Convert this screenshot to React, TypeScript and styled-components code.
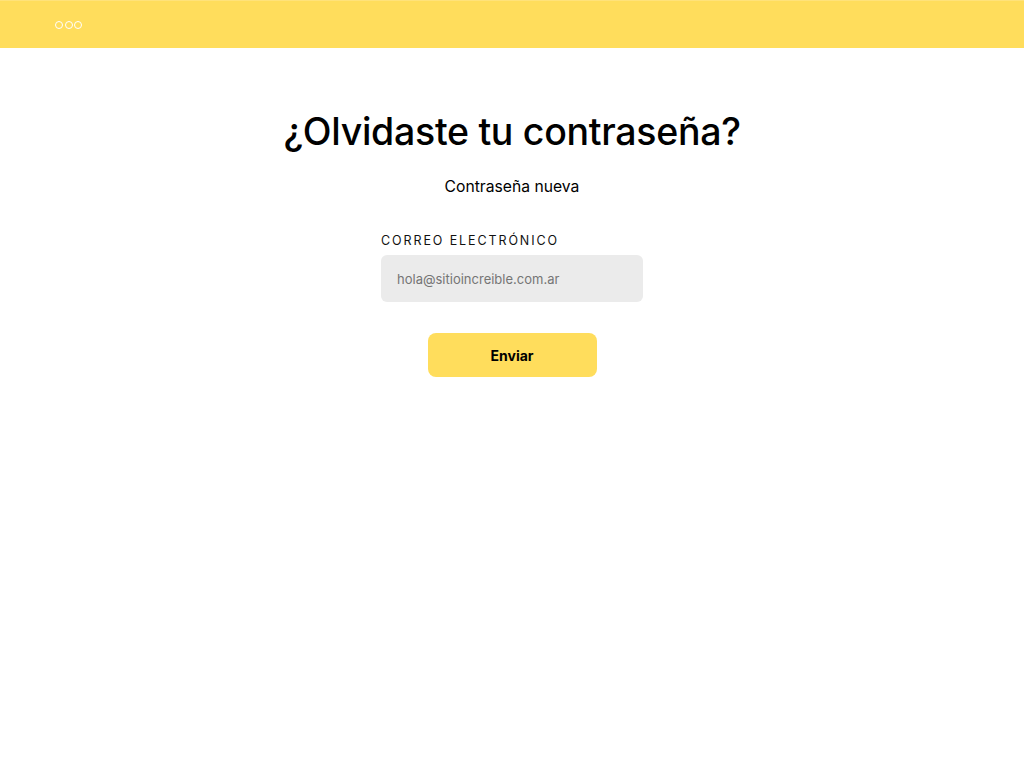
import React from 'react'
import styled, { createGlobalStyle } from 'styled-components'

const GlobalStyle = createGlobalStyle`
  body {
    margin: 0;
    background: #ffffff;
    font-family: Inter, 'Noto Sans', sans-serif;
  }
`

const TopBar = styled.header`
  height: 47px;
  background-color: #ffdd5c;
  border-top: 1px solid #ffe27a;
  display: flex;
  align-items: center;
  padding-left: 55px;
`

const Dots = styled.div`
  display: flex;
  gap: 1.5px;
`

const Dot = styled.span`
  width: 8px;
  height: 8px;
  box-sizing: border-box;
  border: 1.6px solid #ffffff;
  border-radius: 50%;
`

const Main = styled.main`
  display: flex;
  flex-direction: column;
  align-items: center;
  padding-top: 61px;
`

const Title = styled.h1`
  margin: 0;
  font-size: 37.5px;
  font-weight: 500;
  color: #000000;
  letter-spacing: -0.3px;
`

const Subtitle = styled.p`
  margin: 23px 0 0;
  font-size: 15.7px;
  color: #000000;
`

const Form = styled.form`
  width: 262px;
  margin-top: 37px;
  display: flex;
  flex-direction: column;
`

const Label = styled.label`
  font-size: 12.5px;
  letter-spacing: 1.9px;
  color: #111111;
`

const Input = styled.input`
  margin-top: 7px;
  height: 47px;
  box-sizing: border-box;
  border: none;
  border-radius: 6px;
  background-color: #ebebeb;
  padding: 0 16px;
  font-family: inherit;
  font-size: 13px;
  color: #333333;
  outline: none;

  ::placeholder {
    color: #555555;
  }
`

const SubmitButton = styled.button`
  align-self: center;
  margin-top: 31px;
  width: 169px;
  height: 44px;
  border: none;
  border-radius: 8px;
  background-color: #ffdd5c;
  font-family: inherit;
  font-size: 14px;
  font-weight: 700;
  color: #000000;
  cursor: pointer;
`

export default function App() {
  return (
    <>
      <GlobalStyle />
      <TopBar>
        <Dots>
          <Dot />
          <Dot />
          <Dot />
        </Dots>
      </TopBar>
      <Main>
        <Title>¿Olvidaste tu contraseña?</Title>
        <Subtitle>Contraseña nueva</Subtitle>
        <Form onSubmit={(e) => e.preventDefault()}>
          <Label htmlFor="email">CORREO ELECTRÓNICO</Label>
          <Input id="email" type="email" placeholder="hola@sitioincreible.com.ar" />
          <SubmitButton type="submit">Enviar</SubmitButton>
        </Form>
      </Main>
    </>
  )
}
